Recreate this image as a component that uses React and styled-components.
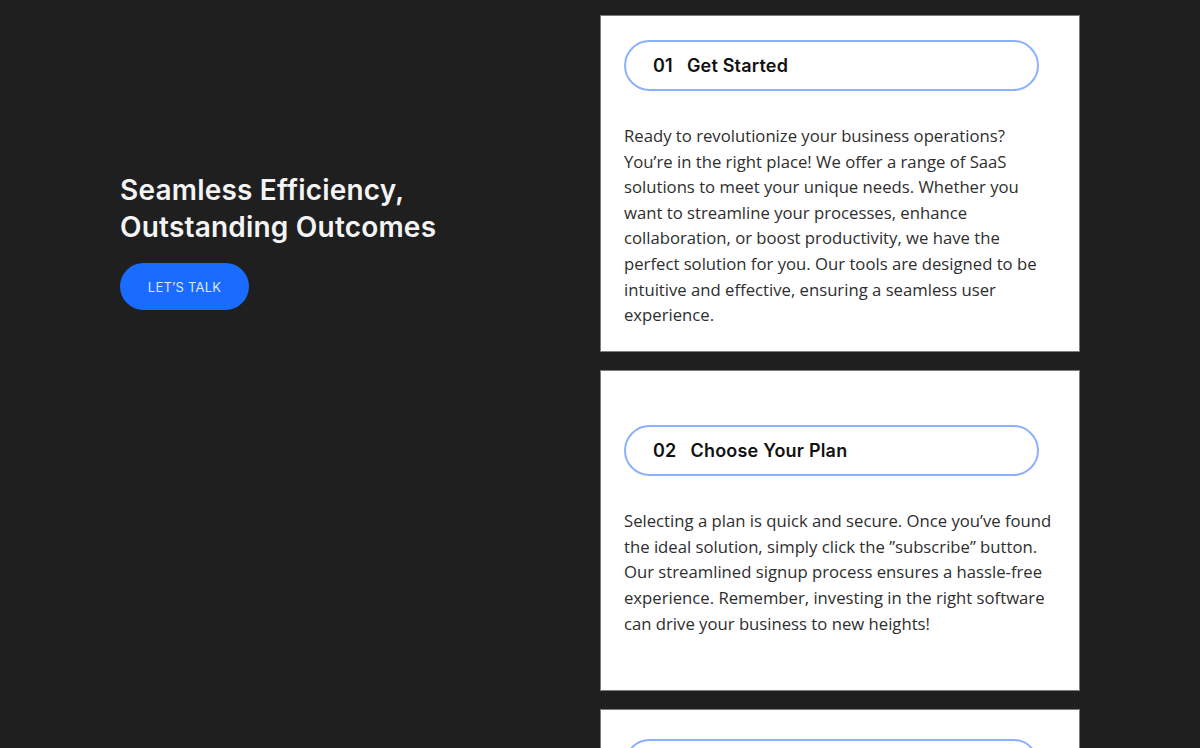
import React from "react";
import styled, { createGlobalStyle } from "styled-components";

const GlobalStyle = createGlobalStyle`
  * { box-sizing: border-box; }
  body {
    margin: 0;
    background: #1f1f1f;
    font-family: Inter, "Noto Sans", sans-serif;
  }
`;

const Section = styled.section`
  width: 960px;
  margin: 0 auto;
  display: grid;
  grid-template-columns: 480px 480px;
  padding-top: 15px;
`;

const Intro = styled.div`
  padding-top: 157px;
`;

const Heading = styled.h2`
  margin: 0;
  color: #f4f4f4;
  font-size: 28px;
  line-height: 37px;
  font-weight: 600;
  letter-spacing: 0.2px;
`;

const TalkButton = styled.button`
  margin-top: 17px;
  width: 129px;
  height: 47px;
  border: none;
  border-radius: 24px;
  background: #1a6bff;
  color: #dfe8ff;
  font-family: Inter, "Noto Sans", sans-serif;
  font-size: 13px;
  font-weight: 400;
  letter-spacing: 0.2px;
  cursor: pointer;
`;

const Steps = styled.div`
  display: flex;
  flex-direction: column;
  gap: 18px;
`;

const Card = styled.article`
  min-height: 321px;
  background: #fff;
  border: 1px solid #7c7c7c;
  padding: 24px 23px 23px;
  display: flex;
  flex-direction: column;
  justify-content: center;
`;

const Pill = styled.div`
  width: 415px;
  height: 51px;
  border: 2px solid #8bb1ff;
  border-radius: 26px;
  display: flex;
  align-items: center;
  gap: 14px;
  padding-left: 27px;
  font-size: 18px;
  font-weight: 600;
  letter-spacing: 0.2px;
  color: #111;
`;

const Text = styled.p`
  margin: 32px 0 0;
  font-family: "Open Sans", Inter, sans-serif;
  font-size: 16.7px;
  line-height: 25.6px;
  color: #2e2e2e;
`;

const steps = [
  {
    num: "01",
    title: "Get Started",
    text: "Ready to revolutionize your business operations? You’re in the right place! We offer a range of SaaS solutions to meet your unique needs. Whether you want to streamline your processes, enhance collaboration, or boost productivity, we have the perfect solution for you. Our tools are designed to be intuitive and effective, ensuring a seamless user experience.",
  },
  {
    num: "02",
    title: "Choose Your Plan",
    text: "Selecting a plan is quick and secure. Once you’ve found the ideal solution, simply click the ”subscribe” button. Our streamlined signup process ensures a hassle-free experience. Remember, investing in the right software can drive your business to new heights!",
  },
  {
    num: "03",
    title: "Get Support",
    text: "Our dedicated team is here to help every step of the way. From onboarding and setup to ongoing questions, you can count on friendly, knowledgeable support. Reach out anytime through chat or email, and we’ll make sure you get the most out of your new tools and keep your business moving forward with confidence every single day.",
  },
];

export default function App() {
  return (
    <>
      <GlobalStyle />
      <Section>
        <Intro>
          <Heading>
            Seamless Efficiency,
            <br />
            Outstanding Outcomes
          </Heading>
          <TalkButton>LET’S TALK</TalkButton>
        </Intro>
        <Steps>
          {steps.map((s) => (
            <Card key={s.num}>
              <Pill>
                <span>{s.num}</span>
                <span>{s.title}</span>
              </Pill>
              <Text>{s.text}</Text>
            </Card>
          ))}
        </Steps>
      </Section>
    </>
  );
}
